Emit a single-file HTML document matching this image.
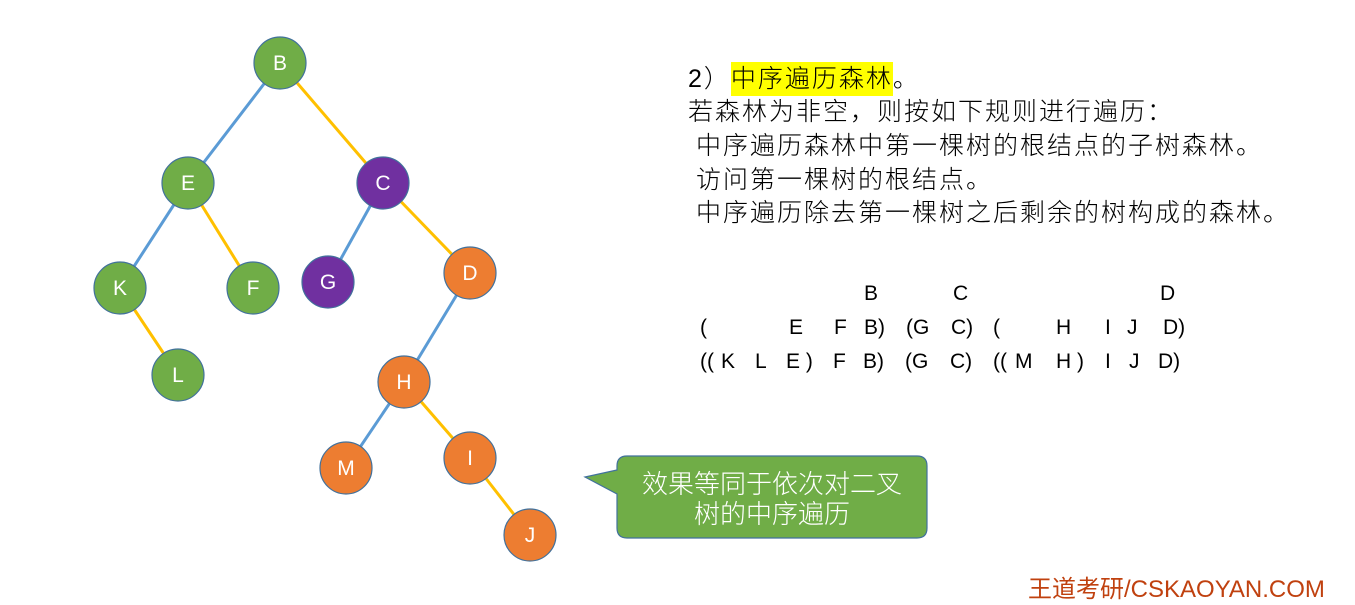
<!DOCTYPE html>
<html><head><meta charset="utf-8"><style>
body{margin:0;width:1355px;height:605px;background:#fff;position:relative;overflow:hidden;font-family:"Liberation Sans","Noto Sans CJK SC",sans-serif}
.t{position:absolute;font-size:25px;color:#000;white-space:nowrap;line-height:1;font-family:"Liberation Sans","Noto Sans CJK SC",sans-serif;font-weight:300;letter-spacing:2px}
.l{position:absolute;font-size:21px;line-height:1;font-family:"Liberation Sans",sans-serif}
</style></head><body>
<svg width="1355" height="605" style="position:absolute;left:0;top:0">
<g stroke-width="3">
<line x1="280" y1="63" x2="188" y2="183" stroke="#5b9bd5"/>
<line x1="280" y1="63" x2="383" y2="183" stroke="#ffc000"/>
<line x1="188" y1="183" x2="120" y2="288" stroke="#5b9bd5"/>
<line x1="188" y1="183" x2="253" y2="288" stroke="#ffc000"/>
<line x1="383" y1="183" x2="328" y2="282" stroke="#5b9bd5"/>
<line x1="383" y1="183" x2="470" y2="273" stroke="#ffc000"/>
<line x1="120" y1="288" x2="178" y2="375" stroke="#ffc000"/>
<line x1="470" y1="273" x2="404" y2="382" stroke="#5b9bd5"/>
<line x1="404" y1="382" x2="346" y2="468" stroke="#5b9bd5"/>
<line x1="404" y1="382" x2="470" y2="458" stroke="#ffc000"/>
<line x1="470" y1="458" x2="530" y2="535" stroke="#ffc000"/>
</g>
<g stroke="#41719c" stroke-width="1.2">
<circle cx="280" cy="63" r="26" fill="#70ad47"/>
<circle cx="188" cy="183" r="26" fill="#70ad47"/>
<circle cx="383" cy="183" r="26" fill="#7030a0"/>
<circle cx="120" cy="288" r="26" fill="#70ad47"/>
<circle cx="253" cy="288" r="26" fill="#70ad47"/>
<circle cx="328" cy="282" r="26" fill="#7030a0"/>
<circle cx="470" cy="273" r="26" fill="#ed7d31"/>
<circle cx="178" cy="375" r="26" fill="#70ad47"/>
<circle cx="404" cy="382" r="26" fill="#ed7d31"/>
<circle cx="346" cy="468" r="26" fill="#ed7d31"/>
<circle cx="470" cy="458" r="26" fill="#ed7d31"/>
<circle cx="530" cy="535" r="26" fill="#ed7d31"/>
</g>
<g fill="#fff" font-family="Liberation Sans" font-size="21" text-anchor="middle">
<text x="280" y="70">B</text><text x="188" y="190">E</text><text x="383" y="190">C</text>
<text x="120" y="295">K</text><text x="253" y="295">F</text><text x="328" y="289">G</text>
<text x="470" y="280">D</text><text x="178" y="382">L</text><text x="404" y="389">H</text>
<text x="346" y="475">M</text><text x="470" y="465">I</text><text x="530" y="542">J</text>
</g>
<path d="M627,456 H917 Q927,456 927,466 V528 Q927,538 917,538 H627 Q617,538 617,528 V494 L585,477 L617,470 V466 Q617,456 627,456 Z" fill="#70ad47" stroke="#41719c" stroke-width="1.2"/>
<g fill="#fff" font-family="Liberation Sans,Noto Sans CJK SC,sans-serif" font-size="26" font-weight="300" text-anchor="middle">
<text x="772" y="493">效果等同于依次对二叉</text>
<text x="772" y="523">树的中序遍历</text>
</g>
</svg>
<div class="t" style="left:688px;top:67px">2）<span style="background:#ffff00;padding:3px 0">中序遍历森林</span>。</div>
<div class="t" style="left:688px;top:100px">若森林为非空，则按如下规则进行遍历：</div>
<div class="t" style="left:696px;top:134px">中序遍历森林中第一棵树的根结点的子树森林。</div>
<div class="t" style="left:696px;top:168px">访问第一棵树的根结点。</div>
<div class="t" style="left:696px;top:201px">中序遍历除去第一棵树之后剩余的树构成的森林。</div>
<span class="l" style="left:864px;top:283px">B</span><span class="l" style="left:953px;top:283px">C</span><span class="l" style="left:1160px;top:283px">D</span>
<span class="l" style="left:700px;top:317px">(</span><span class="l" style="left:789px;top:317px">E</span><span class="l" style="left:834px;top:317px">F</span><span class="l" style="left:864px;top:317px">B)</span><span class="l" style="left:906px;top:317px">(G</span><span class="l" style="left:951px;top:317px">C)</span><span class="l" style="left:993px;top:317px">(</span><span class="l" style="left:1056px;top:317px">H</span><span class="l" style="left:1105px;top:317px">I</span><span class="l" style="left:1127px;top:317px">J</span><span class="l" style="left:1163px;top:317px">D)</span>
<span class="l" style="left:700px;top:351px">((</span><span class="l" style="left:721px;top:351px">K</span><span class="l" style="left:755px;top:351px">L</span><span class="l" style="left:786px;top:351px">E )</span><span class="l" style="left:833px;top:351px">F</span><span class="l" style="left:863px;top:351px">B)</span><span class="l" style="left:905px;top:351px">(G</span><span class="l" style="left:950px;top:351px">C)</span><span class="l" style="left:993px;top:351px">((</span><span class="l" style="left:1015px;top:351px">M</span><span class="l" style="left:1056px;top:351px">H )</span><span class="l" style="left:1105px;top:351px">I</span><span class="l" style="left:1129px;top:351px">J</span><span class="l" style="left:1158px;top:351px">D)</span>
<div style="position:absolute;left:1028px;top:578px;font-size:24px;color:#c0410f;line-height:1;white-space:nowrap">王道考研/CSKAOYAN.COM</div>
</body></html>
